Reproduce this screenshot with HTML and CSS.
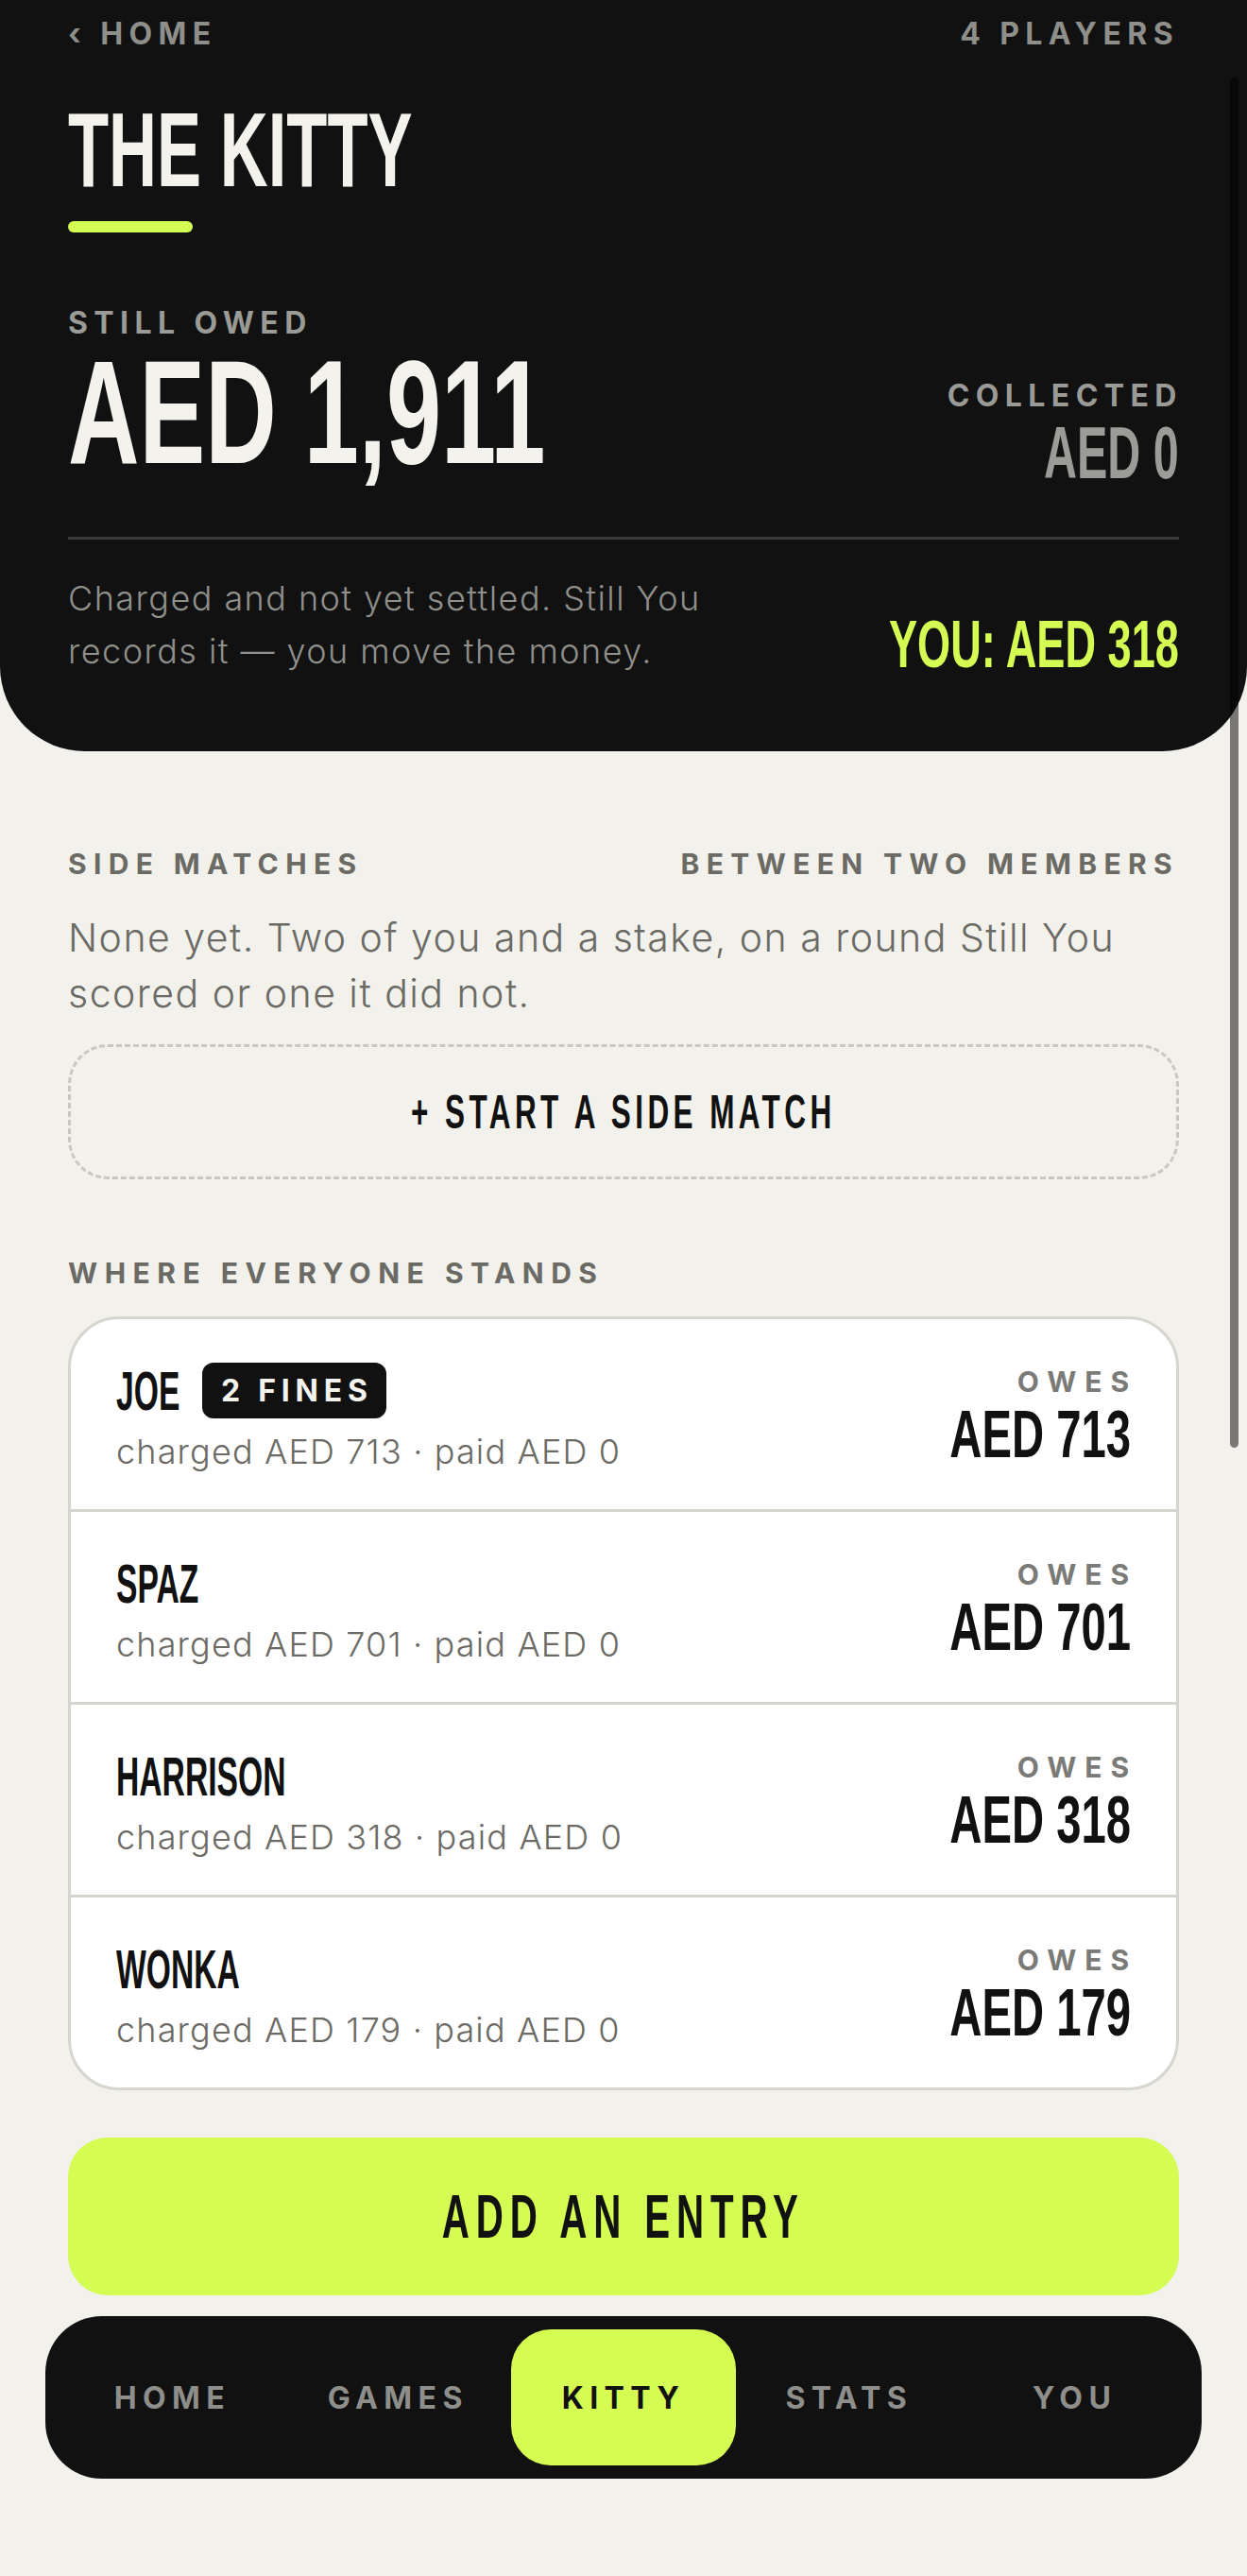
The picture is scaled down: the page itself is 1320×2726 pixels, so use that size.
FILE: index.html
```html
<!DOCTYPE html>
<html lang="en">
<head>
<meta charset="utf-8">
<title>The Kitty</title>
<link rel="stylesheet" href="styles.css">
</head>
<body>
<div class="scroll-thumb"></div>
<div class="page">
  <header class="hero">
    <nav class="topbar">
      <a class="back" href="#"><span class="chev">‹</span> HOME</a>
      <span class="players">4 PLAYERS</span>
    </nav>
    <h1 class="title disp"><span class="cond">THE KITTY</span></h1>
    <div class="accent"></div>
    <div class="totals">
      <div class="owed">
        <div class="label">STILL OWED</div>
        <div class="big disp"><span class="cond">AED 1,911</span></div>
      </div>
      <div class="collected">
        <div class="label">COLLECTED</div>
        <div class="mid disp"><span class="cond cond-r">AED 0</span></div>
      </div>
    </div>
    <div class="rule"></div>
    <div class="foot">
      <p class="desc">Charged and not yet settled. Still You<br>records it — you move the money.</p>
      <div class="you disp"><span class="cond cond-r">YOU: AED 318</span></div>
    </div>
  </header>

  <main class="content">
    <section class="side">
      <div class="sec-head"><span>SIDE MATCHES</span><span>BETWEEN TWO MEMBERS</span></div>
      <p class="empty">None yet. Two of you and a stake, on a round Still You<br>scored or one it did not.</p>
      <button class="dashed disp" type="button"><span class="cond cond-c">+ START A SIDE MATCH</span></button>
    </section>

    <section class="stands">
      <div class="sec-label">WHERE EVERYONE STANDS</div>
      <div class="card">
        <div class="row">
          <div class="who">
            <div class="name-line"><span class="name cond">JOE</span><span class="badge">2 FINES</span></div>
            <div class="sub">charged AED 713 · paid AED 0</div>
          </div>
          <div class="amt">
            <div class="owes-label">OWES</div>
            <div class="owes disp"><span class="cond cond-r">AED 713</span></div>
          </div>
        </div>
        <div class="row">
          <div class="who">
            <div class="name-line"><span class="name cond">SPAZ</span></div>
            <div class="sub">charged AED 701 · paid AED 0</div>
          </div>
          <div class="amt">
            <div class="owes-label">OWES</div>
            <div class="owes disp"><span class="cond cond-r">AED 701</span></div>
          </div>
        </div>
        <div class="row">
          <div class="who">
            <div class="name-line"><span class="name cond">HARRISON</span></div>
            <div class="sub">charged AED 318 · paid AED 0</div>
          </div>
          <div class="amt">
            <div class="owes-label">OWES</div>
            <div class="owes disp"><span class="cond cond-r">AED 318</span></div>
          </div>
        </div>
        <div class="row">
          <div class="who">
            <div class="name-line"><span class="name cond">WONKA</span></div>
            <div class="sub">charged AED 179 · paid AED 0</div>
          </div>
          <div class="amt">
            <div class="owes-label">OWES</div>
            <div class="owes disp"><span class="cond cond-r">AED 179</span></div>
          </div>
        </div>
      </div>
    </section>

    <button class="add disp" type="button"><span class="cond cond-c">ADD AN ENTRY</span></button>

    <nav class="tabbar">
      <a class="tab" href="#">HOME</a>
      <a class="tab" href="#">GAMES</a>
      <a class="tab active" href="#">KITTY</a>
      <a class="tab" href="#">STATS</a>
      <a class="tab" href="#">YOU</a>
    </nav>
  </main>
</div>
</body>
</html>
```

FILE: styles.css
```css
html, body {
  margin: 0;
  padding: 0;
}

body {
  position: relative;
  min-height: 2726px;
  background: #f2f1ec;
  font-family: Inter, "Open Sans", "Liberation Sans", sans-serif;
  color: #111111;
}

.scroll-thumb {
  position: absolute;
  top: 82px;
  right: 9px;
  width: 9px;
  height: 1450px;
  border-radius: 5px;
  background: rgba(0, 0, 0, 0.5);
  z-index: 5;
}

/* condensed display face: Liberation Sans Bold narrowed */
.disp,
.cond {
  font-family: "Liberation Sans Narrow", "Liberation Sans", "Arial Narrow", sans-serif;
  font-weight: 700;
}

.cond {
  display: inline-block;
  white-space: nowrap;
  transform: scaleX(0.63);
  transform-origin: left center;
}

.cond-r { transform-origin: right center; }
.cond-c { transform-origin: center center; }

/* ---------- hero ---------- */
.hero {
  background: #111111;
  border-radius: 0 0 90px 90px;
  padding: 20px 72px 78px;
  color: #f3f2ec;
}

.topbar {
  display: flex;
  justify-content: space-between;
  font-size: 32px;
  font-weight: 700;
  line-height: 1;
  letter-spacing: 0.2em;
  color: #8e8e8a;
}

.back {
  color: inherit;
  text-decoration: none;
}

.title {
  margin: 51px 0 0;
  font-size: 112px;
  line-height: 1;
  color: #f3f2ec;
}

.accent {
  width: 132px;
  height: 12px;
  margin-top: 19px;
  border-radius: 6px;
  background: #d4fc52;
}

.totals {
  display: flex;
  justify-content: space-between;
  align-items: flex-start;
  margin-top: 80px;
}

.label {
  font-size: 32px;
  font-weight: 700;
  line-height: 1;
  letter-spacing: 0.2em;
  color: #9a9a96;
}

.big {
  font-size: 156px;
  line-height: 1;
  color: #f3f2ec;
}

.big .cond {
  transform: scaleX(0.67);
}

.collected {
  margin-top: 77px;
  text-align: right;
}

.collected .label {
  margin-right: -0.12em;
}

.mid {
  margin-top: 6px;
  font-size: 77px;
  line-height: 1;
  color: #9b9b97;
}

.rule {
  height: 3px;
  margin-top: 50px;
  background: #3a3a3a;
}

.foot {
  display: flex;
  justify-content: space-between;
  align-items: flex-end;
  margin-top: 34px;
}

.desc {
  margin: 0;
  font-size: 36px;
  line-height: 56px;
  font-weight: 300;
  letter-spacing: 0.04em;
  color: #8f8f8b;
}

.you {
  font-size: 70px;
  line-height: 1;
  color: #d4fc52;
}

.you .cond {
  transform: scaleX(0.645);
}

/* ---------- content ---------- */
.content {
  padding: 104px 72px 0;
}

.sec-head {
  display: flex;
  justify-content: space-between;
  font-size: 30px;
  font-weight: 700;
  line-height: 1;
  letter-spacing: 0.245em;
  color: #6b6a65;
}

.empty {
  margin: 34px 0 0;
  font-size: 41px;
  line-height: 58.5px;
  font-weight: 300;
  letter-spacing: 0.036em;
  color: #6b6a65;
}

.dashed {
  display: flex;
  align-items: center;
  justify-content: center;
  width: 100%;
  height: 143px;
  margin-top: 25px;
  border: 3px dashed #c8c7c2;
  border-radius: 42px;
  background: transparent;
  font-size: 50px;
  letter-spacing: 0.14em;
  color: #111111;
  padding: 0;
}

.sec-label {
  margin-top: 84px;
  font-size: 30px;
  font-weight: 700;
  line-height: 1;
  letter-spacing: 0.25em;
  color: #6b6a65;
}

.card {
  margin-top: 31px;
  background: #ffffff;
  border: 3px solid #d6d5d0;
  border-radius: 54px;
  overflow: hidden;
}

.row {
  display: flex;
  justify-content: space-between;
  align-items: center;
  padding: 46px 48px 39px;
}

.row + .row {
  border-top: 3px solid #d6d5d0;
}

.name-line {
  display: flex;
  align-items: center;
  min-height: 59px;
}

.name {
  font-size: 58px;
  line-height: 1;
  color: #111111;
  transform: scaleX(0.58);
}

.badge {
  display: flex;
  align-items: center;
  height: 59px;
  margin-left: -25px;
  padding: 0 14px 0 20px;
  border-radius: 12px;
  background: #111111;
  color: #f3f2ec;
  font-size: 32px;
  font-weight: 700;
  line-height: 1;
  letter-spacing: 0.18em;
}

.sub {
  margin-top: 13px;
  font-size: 36px;
  line-height: 44px;
  font-weight: 300;
  letter-spacing: 0.032em;
  color: #6b6a65;
}

.amt {
  text-align: right;
}

.owes-label {
  margin-right: -0.24em;
  font-size: 30px;
  font-weight: 700;
  line-height: 1;
  letter-spacing: 0.3em;
  color: #7a7a76;
}

.owes {
  margin-top: 6px;
  font-size: 70px;
  line-height: 1;
  color: #111111;
}

.owes .cond {
  transform: scaleX(0.675);
}

.add {
  display: flex;
  align-items: center;
  justify-content: center;
  width: 100%;
  height: 167px;
  margin-top: 50px;
  padding: 0;
  border: 0;
  border-radius: 42px;
  background: #d4fc52;
  font-size: 64px;
  letter-spacing: 0.17em;
  color: #111111;
}

.tabbar {
  display: grid;
  grid-template-columns: repeat(5, 1fr);
  margin: 22px -24px 0;
  padding: 14px 15px;
  border-radius: 60px;
  background: #111111;
}

.tab {
  display: flex;
  align-items: center;
  justify-content: center;
  height: 144px;
  border-radius: 42px;
  font-size: 32px;
  font-weight: 700;
  letter-spacing: 0.2em;
  color: #8e8e8a;
  text-decoration: none;
}

.tab.active {
  background: #d4fc52;
  color: #111111;
}
```
